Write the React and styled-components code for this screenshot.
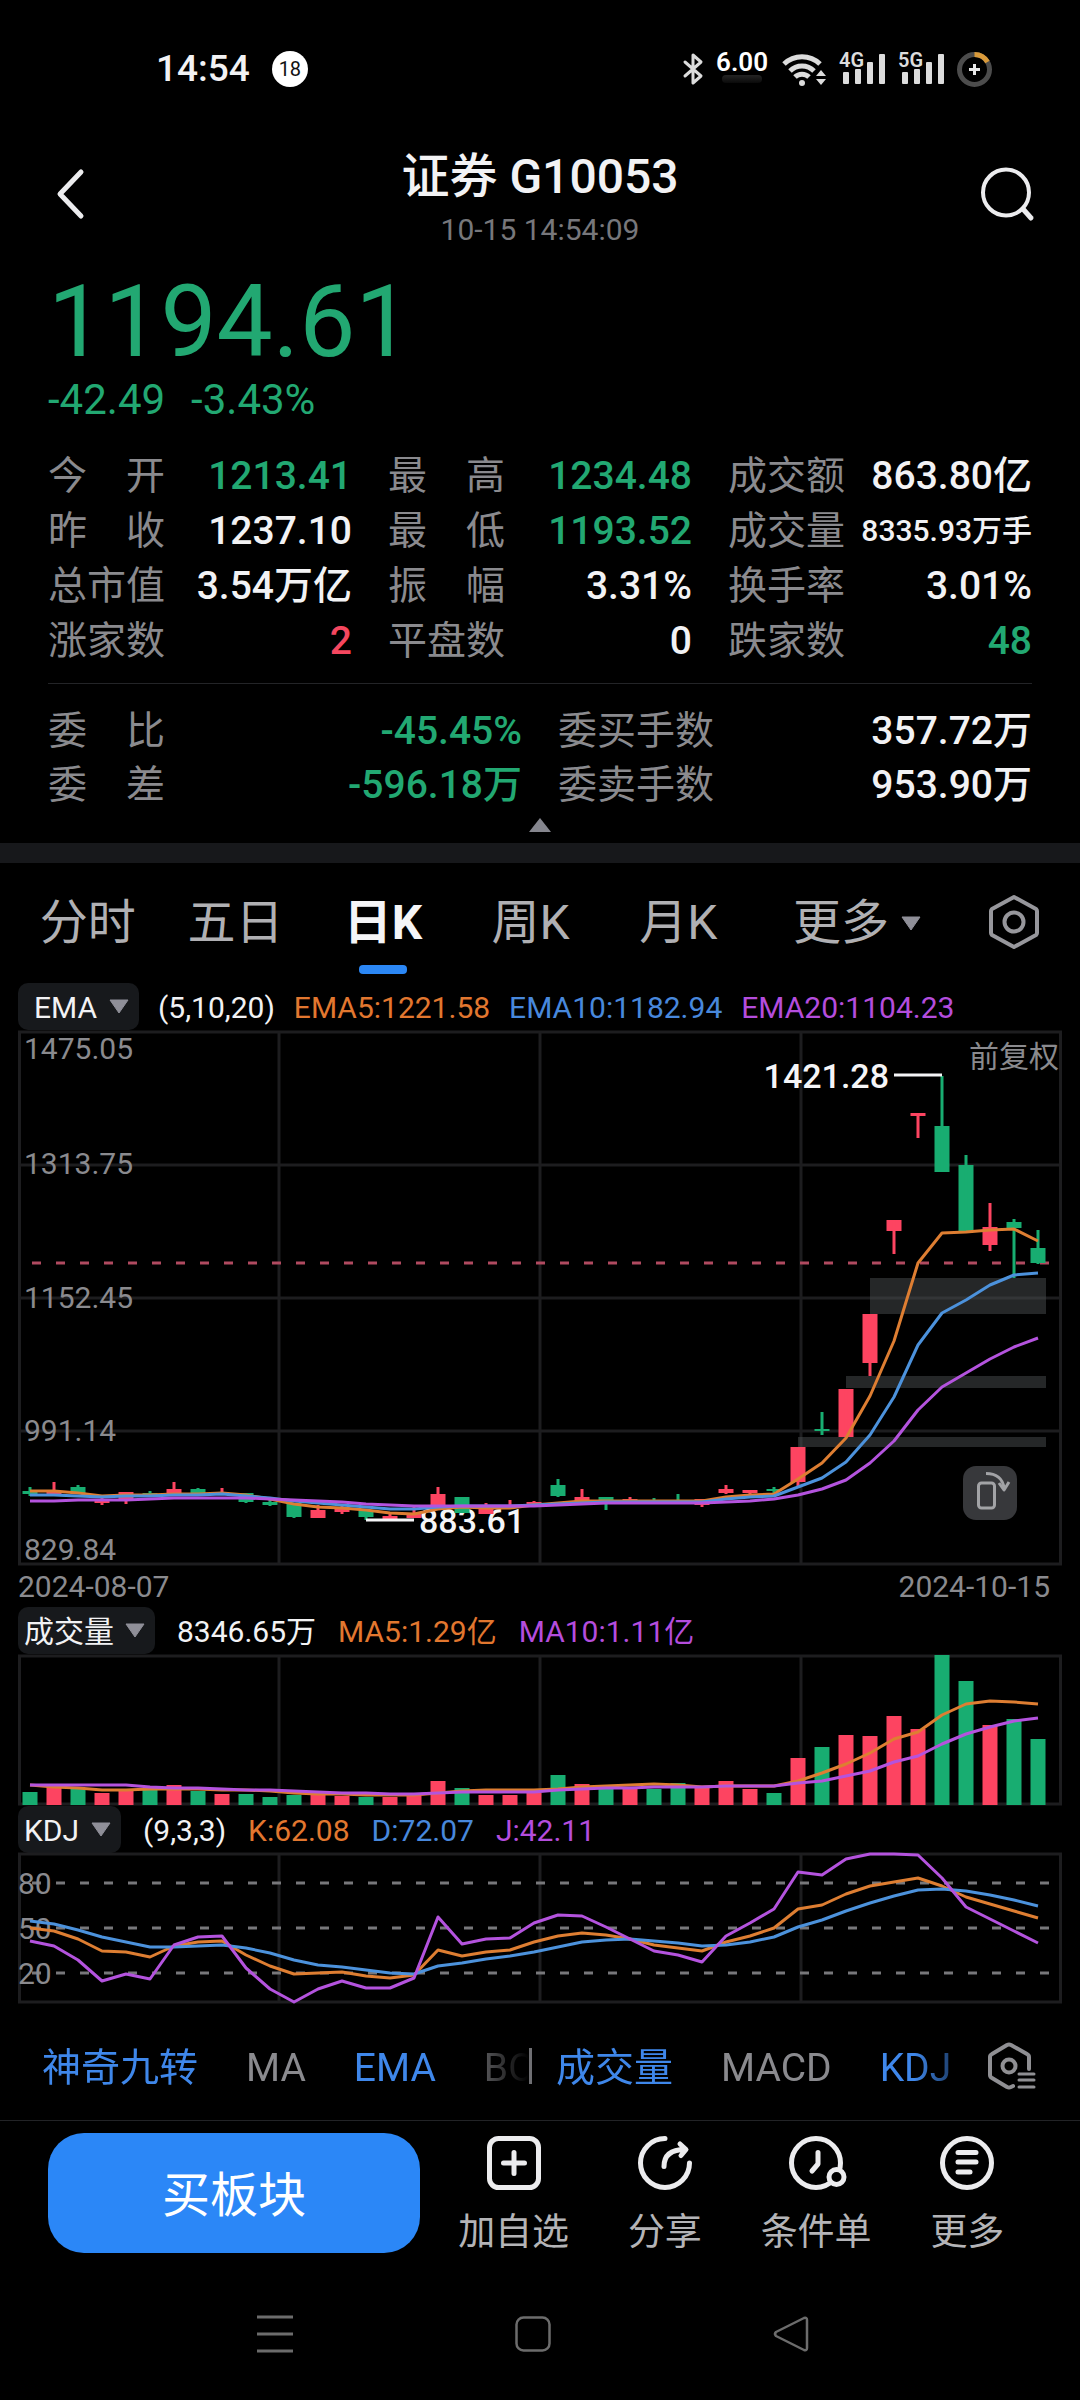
import React, { useState } from 'react';
import styled, { createGlobalStyle, css } from 'styled-components';

const GlobalStyle = createGlobalStyle`
  * {
    box-sizing: border-box;
  }

  body {
    margin: 0;
    background: #000000;
    color: #f2f2f4;
    font-family: Roboto, 'Noto Sans CJK SC', sans-serif;
  }

  button,
  select {
    margin: 0;
    padding: 0;
    border: 0;
    background: none;
    color: inherit;
    font: inherit;
    cursor: pointer;
  }

  svg {
    display: block;
    flex: none;
    overflow: visible;
  }
`;

const tones = {
  up: '#f5475f',
  down: '#22a872',
  plain: '#f2f2f4',
  orange: '#e2772f',
  blue: '#4888dc',
  purple: '#b44ddd',
};

const RED = '#fd4461';
const GREEN = '#18ad71';
const GRID = '#1d1d1f';
const MUTED = '#8a8a8e';

const Page = styled.div`
  display: flex;
  flex-direction: column;
  min-height: 100vh;
  background: #000000;
`;

const StatusBar = styled.div`
  display: flex;
  align-items: center;
  justify-content: space-between;
  height: 138px;
  padding: 0 88px 0 156px;
`;

const StatusGroup = styled.div`
  display: flex;
  align-items: center;
  gap: ${({ $gap }) => $gap}px;
`;

const Clock = styled.span`
  font-size: 37px;
  font-weight: 500;
  line-height: 44px;
`;

const NoticeCount = styled.span`
  display: grid;
  place-items: center;
  width: 36px;
  height: 36px;
  border-radius: 50%;
  background: #ffffff;
  color: #111111;
  font-size: 20px;
`;

const NetSpeed = styled.span`
  display: flex;
  flex-direction: column;
  align-items: center;
  height: 36px;
  color: #ffffff;
  font-size: 26px;
  font-weight: 600;
  line-height: 22px;

  &::after {
    content: '';
    width: 40px;
    height: 8px;
    margin-top: 2px;
    border-radius: 4px;
    background: linear-gradient(#242424, #0a0a0a);
  }
`;

const Header = styled.header`
  display: flex;
  align-items: flex-start;
  justify-content: space-between;
  min-height: 128px;
  padding: 9px 44px 0;
`;

const IconButton = styled.button`
  display: grid;
  place-items: center;
  width: 54px;
  height: 94px;
`;

const TitleBlock = styled.div`
  text-align: center;
`;

const Title = styled.h1`
  margin: 0;
  font-size: 48px;
  font-weight: 500;
  line-height: 60px;
`;

const Timestamp = styled.div`
  color: #77777b;
  font-size: 30px;
  line-height: 46px;
`;

const Quote = styled.section`
  padding: 0 48px 11px;
`;

const Price = styled.div`
  color: ${tones.down};
  font-size: 100px;
  line-height: 112px;
`;

const Change = styled.div`
  display: flex;
  gap: 26px;
  margin-bottom: 26px;
  color: ${tones.down};
  font-size: 42px;
  line-height: 44px;
`;

const Stats = styled.dl`
  display: grid;
  grid-template-columns: repeat(${({ $columns }) => $columns}, 1fr);
  grid-auto-rows: ${({ $row }) => $row}px;
  column-gap: 36px;
  margin: 0;
`;

const Stat = styled.div`
  display: flex;
  align-items: center;
  justify-content: space-between;
  white-space: nowrap;
`;

const StatLabel = styled.dt`
  color: ${MUTED};
  font-size: 39px;
  line-height: 54px;
`;

const StatValue = styled.dd`
  margin: 0;
  color: ${({ $tone }) => tones[$tone]};
  font-size: ${({ $small }) => ($small ? 30 : 39)}px;
  font-weight: 500;
  line-height: 54px;
`;

const Divider = styled.hr`
  margin: 15px 0 20px;
  border: 0;
  border-top: 1px solid #232427;
`;

const Collapse = styled.button`
  display: block;
  margin: 6px auto 0;
`;

const Band = styled.div`
  height: 20px;
  background: #17181b;
`;

const Tabs = styled.nav`
  display: grid;
  grid-template-columns: repeat(5, 1fr) 210px 104px;
  padding: 30px 14px 0;
`;

const Tab = styled.button`
  display: flex;
  flex-direction: column;
  align-items: center;
  gap: 12px;
  color: ${({ $active }) => ($active ? '#f5f5f7' : '#b0b0b3')};
  font-size: 48px;
  font-weight: ${({ $active }) => ($active ? 700 : 400)};
  line-height: 60px;
  white-space: nowrap;

  &::after {
    content: '';
    width: 48px;
    height: 9px;
    border-radius: 4px;
    background: ${({ $active }) => ($active ? '#2b87f5' : 'transparent')};
  }
`;

const MoreTab = styled.button`
  display: flex;
  align-items: center;
  justify-content: center;
  gap: 12px;
  height: 60px;
  color: #b0b0b3;
  font-size: 48px;
  line-height: 60px;
`;

const TabSettings = styled.button`
  display: grid;
  place-items: center;
  height: 58px;
`;

const Charts = styled.section`
  padding-top: 9px;
`;

const Legend = styled.div`
  display: flex;
  align-items: center;
  gap: ${({ $gap }) => $gap}px;
  height: 47px;
  padding-left: 18px;
  font-size: 30px;
  line-height: 44px;
  white-space: nowrap;
`;

const Chip = styled.label`
  display: flex;
  align-items: center;
  height: 47px;
  padding: 0 10px 0 ${({ $inset }) => $inset}px;
  border-radius: 10px;
  background: #17191c;

  svg {
    margin-left: -20px;
    pointer-events: none;
  }
`;

const ChipSelect = styled.select`
  appearance: none;
  padding: 3px 31px 0 0;

  option {
    color: #111111;
  }
`;

const LegendItem = styled.span`
  padding-top: 3px;
  color: ${({ $tone }) => tones[$tone]};
`;

const ChartArea = styled.div`
  position: relative;
`;

const Plot = styled.svg`
  width: 100%;
  height: auto;

  text {
    fill: ${MUTED};
    font-size: 30px;
  }

  text.mark {
    fill: #f5f5f7;
    font-size: 34px;
    font-weight: 500;
  }
`;

const RotateButton = styled.button`
  position: absolute;
  right: 63px;
  bottom: 45px;
  display: grid;
  place-items: center;
  width: 54px;
  height: 54px;
  border-radius: 13px;
  background: #37383b;
`;

const Dates = styled.div`
  display: flex;
  justify-content: space-between;
  padding: 2px 30px 0 18px;
  color: ${MUTED};
  font-size: 30px;
  line-height: 40px;
`;

const Indicators = styled.div`
  display: flex;
  align-items: center;
  height: 117px;
  padding: 8px 44px 0 42px;
  border-bottom: 1px solid #222326;
`;

const fade = css`
  mask-image: linear-gradient(to right, #000 calc(100% - 72px), transparent);
`;

const IndicatorList = styled.div`
  display: flex;
  flex: ${({ $grow }) => $grow} 1 0;
  min-width: 0;
  gap: 48px;
  overflow: hidden;
  ${fade}
`;

const Separator = styled.span`
  width: 3px;
  height: 36px;
  margin-right: 24px;
  background: #6f6f73;
`;

const Indicator = styled.button`
  flex: none;
  padding-top: 4px;
  color: ${({ $on }) => ($on ? '#3f87ea' : MUTED)};
  font-size: 39px;
  line-height: 54px;
`;

const BottomBar = styled.div`
  display: flex;
  align-items: flex-start;
  padding: 12px 37px 12px 48px;
`;

const BuyButton = styled.button`
  flex: 372 1 0;
  height: 120px;
  margin-right: 18px;
  padding-bottom: 4px;
  border-radius: 36px;
  background: #2b87f7;
  color: #ffffff;
  font-size: 48px;
`;

const Actions = styled.div`
  display: grid;
  flex: 605 1 0;
  grid-template-columns: repeat(4, 1fr);
  padding-top: 3px;
`;

const Action = styled.button`
  display: flex;
  flex-direction: column;
  align-items: center;
  gap: 20px;
  color: #b4b4b7;
  font-size: 37px;
  line-height: 46px;
  white-space: nowrap;
`;

const SystemNav = styled.nav`
  display: grid;
  grid-template-columns: repeat(3, 1fr);
  height: 132px;
  padding: 0 160px 0 146px;
`;

const SystemButton = styled.button`
  display: grid;
  place-items: center;
`;

/* ---------- data ---------- */

const stats = [
  { label: '今　开', value: '1213.41', tone: 'down' },
  { label: '最　高', value: '1234.48', tone: 'down' },
  { label: '成交额', value: '863.80亿', tone: 'plain' },
  { label: '昨　收', value: '1237.10', tone: 'plain' },
  { label: '最　低', value: '1193.52', tone: 'down' },
  { label: '成交量', value: '8335.93万手', tone: 'plain', small: true },
  { label: '总市值', value: '3.54万亿', tone: 'plain' },
  { label: '振　幅', value: '3.31%', tone: 'plain' },
  { label: '换手率', value: '3.01%', tone: 'plain' },
  { label: '涨家数', value: '2', tone: 'up' },
  { label: '平盘数', value: '0', tone: 'plain' },
  { label: '跌家数', value: '48', tone: 'down' },
];

const orders = [
  { label: '委　比', value: '-45.45%', tone: 'down' },
  { label: '委买手数', value: '357.72万', tone: 'plain' },
  { label: '委　差', value: '-596.18万', tone: 'down' },
  { label: '委卖手数', value: '953.90万', tone: 'plain' },
];

const periods = ['分时', '五日', '日K', '周K', '月K'];

// direction, body top, body bottom, wick top, wick bottom
const candles = [
  ['g', 1491, 1494, 1487, 1496], ['r', 1491, 1495, 1482, 1495], ['g', 1487, 1494, 1485, 1494],
  ['r', 1500, 1503, 1497, 1505], ['r', 1492, 1499, 1492, 1504], ['g', 1493, 1496, 1491, 1496],
  ['r', 1489, 1495, 1482, 1495], ['g', 1489, 1494, 1488, 1494], ['r', 1493, 1495, 1488, 1495],
  ['g', 1493, 1502, 1493, 1503], ['g', 1502, 1505, 1500, 1506], ['g', 1503, 1517, 1503, 1518],
  ['r', 1510, 1518, 1505, 1518], ['r', 1507, 1512, 1506, 1514], ['g', 1511, 1517, 1511, 1520],
  ['r', 1516, 1519, 1514, 1519], ['r', 1513, 1518, 1505, 1518], ['r', 1494, 1509, 1487, 1509],
  ['g', 1497, 1513, 1497, 1513], ['r', 1509, 1514, 1503, 1514], ['r', 1505, 1507, 1500, 1507],
  ['r', 1502, 1504, 1501, 1504], ['g', 1485, 1496, 1479, 1497], ['r', 1497, 1505, 1489, 1505],
  ['g', 1497, 1504, 1497, 1510], ['r', 1499, 1502, 1497, 1502], ['g', 1500, 1503, 1498, 1503],
  ['g', 1500, 1503, 1494, 1503], ['r', 1499, 1505, 1499, 1507], ['r', 1489, 1493, 1485, 1494],
  ['r', 1490, 1493, 1490, 1495], ['g', 1489, 1491, 1487, 1494], ['r', 1447, 1482, 1447, 1487],
  ['g', 1429, 1431, 1412, 1435], ['r', 1389, 1437, 1389, 1437], ['r', 1314, 1363, 1314, 1376],
  ['r', 1220, 1231, 1220, 1254], ['r', 1113, 1116, 1113, 1138], ['g', 1126, 1172, 1076, 1172],
  ['g', 1165, 1231, 1155, 1231], ['r', 1227, 1245, 1203, 1251], ['g', 1222, 1228, 1219, 1278],
  ['g', 1248, 1263, 1230, 1264],
];

const ema5 = [
  1491, 1491, 1493, 1496, 1495, 1495, 1494, 1494, 1493, 1495, 1499, 1504, 1507, 1508, 1510,
  1513, 1514, 1509, 1507, 1508, 1508, 1505, 1503, 1501, 1501, 1501, 1501, 1501, 1501, 1497,
  1495, 1494, 1479, 1463, 1438, 1396, 1341, 1263, 1233, 1232, 1230, 1229, 1241,
];
const ema10 = [
  1495, 1495, 1496, 1497, 1496, 1496, 1495, 1495, 1494, 1496, 1498, 1501, 1503, 1505, 1507,
  1509, 1509, 1507, 1506, 1506, 1506, 1505, 1504, 1503, 1502, 1502, 1502, 1502, 1502, 1499,
  1497, 1496, 1487, 1478, 1462, 1435, 1397, 1345, 1313, 1300, 1285, 1275, 1273,
];
const ema20 = [
  1501, 1501, 1500, 1500, 1500, 1499, 1498, 1498, 1498, 1498, 1499, 1500, 1501, 1502, 1504,
  1505, 1506, 1506, 1506, 1506, 1506, 1506, 1505, 1504, 1503, 1503, 1503, 1503, 1503, 1502,
  1501, 1499, 1495, 1489, 1480, 1463, 1441, 1410, 1387, 1373, 1359, 1347, 1338,
];

const volumes = [
  1792, 1786, 1789, 1793, 1790, 1790, 1785, 1791, 1794, 1794, 1797, 1795, 1795, 1796, 1797,
  1797, 1796, 1781, 1788, 1795, 1795, 1793, 1775, 1784, 1789, 1788, 1789, 1783, 1788, 1781,
  1789, 1793, 1758, 1747, 1735, 1736, 1716, 1729, 1655, 1681, 1725, 1719, 1739,
];
const volMa5 = [
  1785, 1787, 1788, 1790, 1790, 1789, 1789, 1789, 1790, 1790, 1791, 1793, 1794, 1794, 1795,
  1795, 1795, 1793, 1791, 1790, 1790, 1790, 1789, 1787, 1786, 1785, 1784, 1785, 1787, 1786,
  1786, 1786, 1781, 1773, 1764, 1753, 1739, 1732, 1715, 1704, 1701, 1702, 1704,
];
const volMa10 = [
  1785, 1785, 1785, 1785, 1785, 1787, 1788, 1788, 1789, 1790, 1790, 1791, 1792, 1793, 1793,
  1794, 1794, 1793, 1792, 1792, 1792, 1792, 1790, 1789, 1788, 1788, 1787, 1787, 1787, 1786,
  1786, 1786, 1783, 1781, 1776, 1771, 1762, 1756, 1744, 1734, 1727, 1721, 1718,
];

const kLine = [
  1928, 1931, 1939, 1951, 1952, 1957, 1946, 1942, 1941, 1955, 1966, 1974, 1973, 1972, 1976,
  1978, 1975, 1950, 1956, 1952, 1950, 1942, 1936, 1933, 1935, 1939, 1945, 1948, 1951, 1942,
  1936, 1928, 1909, 1905, 1894, 1886, 1882, 1878, 1886, 1897, 1904, 1911, 1918,
];
const dLine = [
  1921, 1924, 1930, 1937, 1942, 1947, 1947, 1946, 1945, 1948, 1953, 1960, 1965, 1967, 1970,
  1973, 1974, 1966, 1963, 1959, 1956, 1952, 1947, 1942, 1940, 1939, 1941, 1943, 1946, 1945,
  1942, 1937, 1927, 1920, 1911, 1903, 1896, 1890, 1889, 1891, 1895, 1900, 1906,
];
const jLine = [
  1941, 1946, 1960, 1981, 1974, 1979, 1945, 1937, 1936, 1968, 1989, 2002, 1989, 1981, 1988,
  1988, 1978, 1917, 1944, 1939, 1938, 1923, 1915, 1916, 1927, 1939, 1951, 1955, 1962, 1936,
  1923, 1909, 1872, 1875, 1859, 1854, 1854, 1855, 1878, 1907, 1919, 1931, 1943,
];

const GAP_ZONES = [
  [870, 1278, 36],
  [846, 1376, 12],
  [798, 1437, 10],
];

const slotX = (i) => 30 + i * 24;
const toPoints = (values) => values.map((y, i) => `${slotX(i)},${y}`).join(' ');

/* ---------- small drawings ---------- */

const DownTriangle = () => (
  <svg width="20" height="15" viewBox="0 0 20 15">
    <path d="M1 1h18L10 14z" fill="#8f8f98" stroke="#8f8f98" strokeLinejoin="round" />
  </svg>
);

const SignalIcon = ({ label }) => (
  <svg width="46" height="36" viewBox="0 0 46 36">
    <g fill="#dcdcdc">
      <rect x="4" y="21" width="6" height="12" rx="1" />
      <rect x="16" y="18" width="6" height="15" rx="1" />
      <rect x="28" y="11" width="6" height="22" rx="1" />
      <rect x="40" y="3" width="6" height="30" rx="1" />
    </g>
    <text x="0" y="16" fill="#dcdcdc" fontSize="20" fontWeight="600">{label}</text>
  </svg>
);

const StatusIcons = () => (
  <StatusGroup $gap={13}>
    <svg width="20" height="34" viewBox="0 0 20 34" fill="none" stroke="#dcdcdc" strokeWidth="3" strokeLinejoin="round" strokeLinecap="round">
      <path d="M2 10l16 14-8 7V3l8 7L2 24" />
    </svg>
    <NetSpeed>6.00</NetSpeed>
    <svg width="45" height="36" viewBox="0 0 45 36" fill="none" stroke="#dcdcdc" strokeWidth="5">
      <path d="M3 13a26 26 0 0 1 36 0" />
      <path d="M9 20a17 17 0 0 1 24 0" />
      <path d="M14 26a10 10 0 0 1 14 0" />
      <g fill="#dcdcdc" stroke="none">
        <circle cx="21" cy="32" r="3" />
        <path d="M35 25l5-6 5 6zM35 28h10l-5 6z" />
      </g>
    </svg>
    <SignalIcon label="4G" />
    <SignalIcon label="5G" />
    <svg width="35" height="35" viewBox="0 0 35 35" fill="none">
      <circle cx="17.5" cy="17.5" r="15" stroke="#4c4c4c" strokeWidth="5" />
      <path d="M17.5 2.5A15 15 0 0 1 30.5 10" stroke="#d99a3a" strokeWidth="5" />
      <path d="M17.5 12v11M12 17.5h11" stroke="#e8e8e8" strokeWidth="3" />
    </svg>
  </StatusGroup>
);

const actions = [
  {
    label: '加自选',
    icon: (
      <>
        <rect x="2.5" y="2.5" width="49" height="49" rx="9" />
        <path d="M27 16.5v21M16.5 27h21" />
      </>
    ),
  },
  {
    label: '分享',
    icon: (
      <>
        <path d="M27 2.5A24.5 24.5 0 1 0 51.5 27" />
        <path d="M26 30.5C26 20 32 13.5 47 13.5M42 8l6 5.5-5 6" />
      </>
    ),
  },
  {
    label: '条件单',
    icon: (
      <>
        <circle cx="27" cy="27" r="24.5" />
        <path d="M29 16.5V28l-6 7" />
        <circle cx="47.5" cy="41" r="7.5" fill="#000" />
      </>
    ),
  },
  {
    label: '更多',
    icon: (
      <>
        <circle cx="27" cy="27" r="24.5" />
        <path d="M18 16.5h18M18 26h18M18 36h12" />
      </>
    ),
  },
];

/* ---------- charts ---------- */

const Frame = ({ top, bottom }) => (
  <g stroke={GRID} strokeWidth="3" fill="none">
    <rect x="19.5" y={top} width="1041" height={bottom - top} />
    <path d={[279, 540, 801].map((x) => `M${x} ${top}V${bottom}`).join('')} />
  </g>
);

const Lines = ({ orange, blue, purple }) => (
  <g fill="none" strokeWidth="3" strokeLinejoin="round">
    {orange && <polyline points={toPoints(orange)} stroke="#de7e32" />}
    {blue && <polyline points={toPoints(blue)} stroke="#4c92dc" />}
    {purple && <polyline points={toPoints(purple)} stroke="#b453de" />}
  </g>
);

const PriceChart = () => (
  <Plot viewBox="0 1030 1080 535" role="img" aria-label="日K线图">
    <Frame top={1032} bottom={1564} />
    <path d="M19 1165H1061M19 1298H1061M19 1431H1061" stroke={GRID} strokeWidth="3" />
    {GAP_ZONES.map(([x, y, h]) => (
      <rect key={y} x={x} y={y} width={1046 - x} height={h} fill="#4a4d50" fillOpacity="0.5" />
    ))}
    <path d="M32 1263H1050" stroke="#b04a60" strokeWidth="3" strokeDasharray="9 15" />
    <text x="24" y="1059">1475.05</text>
    <text x="24" y="1174">1313.75</text>
    <text x="24" y="1308">1152.45</text>
    <text x="24" y="1441">991.14</text>
    <text x="24" y="1560">829.84</text>
    <text x="1059" y="1067" textAnchor="end">前复权</text>
    <text className="mark" x="889" y="1088" textAnchor="end">1421.28</text>
    <text className="mark" x="419" y="1533">883.61</text>
    {candles.map(([dir, top, bottom, high, low], i) => (
      <g key={i} fill={dir === 'r' ? RED : GREEN}>
        <rect x={slotX(i) - 7.5} y={top} width="15" height={bottom - top} />
        <rect x={slotX(i) - 1.5} y={high} width="3" height={low - high} />
      </g>
    ))}
    <path d="M894 1075H942M366 1520H414" stroke="#f5f5f7" strokeWidth="3" />
    <Lines orange={ema5} blue={ema10} purple={ema20} />
  </Plot>
);

const VolumeChart = () => (
  <Plot viewBox="0 1654 1080 152" role="img" aria-label="成交量">
    <Frame top={1656} bottom={1804} />
    {volumes.map((y, i) => (
      <rect
        key={i}
        x={slotX(i) - 7.5}
        y={y}
        width="15"
        height={1805 - y}
        fill={candles[i][0] === 'r' ? RED : GREEN}
      />
    ))}
    <Lines orange={volMa5} purple={volMa10} />
  </Plot>
);

const KdjChart = () => (
  <Plot viewBox="0 1853 1080 151" role="img" aria-label="KDJ">
    <Frame top={1854} bottom={2002} />
    <path
      d="M32 1883H1050M32 1928H1050M32 1973H1050"
      stroke="#77777a"
      strokeWidth="3"
      strokeDasharray="9 15"
    />
    <text x="18" y="1894">80</text>
    <text x="18" y="1939">50</text>
    <text x="18" y="1984">20</text>
    <Lines orange={kLine} blue={dLine} purple={jLine} />
  </Plot>
);

const LegendChip = ({ options, inset, title }) => (
  <Chip $inset={inset}>
    <ChipSelect aria-label={title}>
      {options.map((name) => (
        <option key={name}>{name}</option>
      ))}
    </ChipSelect>
    <DownTriangle />
  </Chip>
);

const StatList = ({ items, columns, row }) => (
  <Stats $columns={columns} $row={row}>
    {items.map(({ label, value, tone, small }) => (
      <Stat key={label}>
        <StatLabel>{label}</StatLabel>
        <StatValue $tone={tone} $small={small}>{value}</StatValue>
      </Stat>
    ))}
  </Stats>
);

const App = () => {
  const [period, setPeriod] = useState('日K');

  return (
    <Page>
      <GlobalStyle />

      <StatusBar>
        <StatusGroup $gap={22}>
          <Clock>14:54</Clock>
          <NoticeCount>18</NoticeCount>
        </StatusGroup>
        <StatusIcons />
      </StatusBar>

      <Header>
        <IconButton aria-label="返回">
          <svg width="54" height="54" viewBox="0 0 54 54" fill="none" stroke="#ececee" strokeWidth="5" strokeLinecap="round" strokeLinejoin="round">
            <path d="M37 5L16 27l21 22" />
          </svg>
        </IconButton>
        <TitleBlock>
          <Title>证券 G10053</Title>
          <Timestamp>10-15 14:54:09</Timestamp>
        </TitleBlock>
        <IconButton aria-label="搜索">
          <svg width="54" height="54" viewBox="0 0 54 54" fill="none" stroke="#ececee" strokeWidth="4" strokeLinecap="round">
            <circle cx="24" cy="25.5" r="23" />
            <path d="M41 42l8 9" strokeWidth="5" />
          </svg>
        </IconButton>
      </Header>

      <Quote>
        <Price>1194.61</Price>
        <Change>
          <span>-42.49</span>
          <span>-3.43%</span>
        </Change>
        <StatList items={stats} columns={3} row={55} />
        <Divider />
        <StatList items={orders} columns={2} row={54} />
        <Collapse aria-label="收起">
          <svg width="22" height="14" viewBox="0 0 22 14">
            <path d="M0 14L11 0l11 14z" fill="#85868e" />
          </svg>
        </Collapse>
      </Quote>

      <Band />

      <Tabs>
        {periods.map((name) => (
          <Tab key={name} $active={name === period} onClick={() => setPeriod(name)}>
            {name}
          </Tab>
        ))}
        <MoreTab aria-haspopup="menu">
          更多
          <DownTriangle />
        </MoreTab>
        <TabSettings aria-label="图表设置">
          <svg width="54" height="56" viewBox="0 0 54 56" fill="none" stroke="#97979c" strokeWidth="4" strokeLinejoin="round">
            <path d="M27 3l22 12q1 1 1 2v22q0 1-1 2L27 53 5 41q-1-1-1-2V17q0-1 1-2z" />
            <circle cx="27" cy="28" r="9.5" />
          </svg>
        </TabSettings>
      </Tabs>

      <Charts>
        <Legend $gap={19}>
          <LegendChip options={['EMA', 'MA']} inset={16} title="主图指标" />
          <LegendItem $tone="plain">(5,10,20)</LegendItem>
          <LegendItem $tone="orange">EMA5:1221.58</LegendItem>
          <LegendItem $tone="blue">EMA10:1182.94</LegendItem>
          <LegendItem $tone="purple">EMA20:1104.23</LegendItem>
        </Legend>
        <ChartArea>
          <PriceChart />
          <RotateButton aria-label="横屏">
            <svg width="54" height="54" viewBox="0 0 54 54" fill="none" stroke="#a2a3a6" strokeWidth="3" strokeLinejoin="round">
              <rect x="15.5" y="17" width="16" height="25" rx="3" />
              <path d="M23 7.5c10 0 17 5 18 15" />
              <path d="M36 17l5 7 5-8" />
            </svg>
          </RotateButton>
        </ChartArea>
        <Dates>
          <span>2024-08-07</span>
          <span>2024-10-15</span>
        </Dates>

        <Legend $gap={22}>
          <LegendChip options={['成交量']} inset={6} title="副图一指标" />
          <LegendItem $tone="plain">8346.65万</LegendItem>
          <LegendItem $tone="orange">MA5:1.29亿</LegendItem>
          <LegendItem $tone="purple">MA10:1.11亿</LegendItem>
        </Legend>
        <VolumeChart />

        <Legend $gap={22}>
          <LegendChip options={['KDJ']} inset={6} title="副图二指标" />
          <LegendItem $tone="plain">(9,3,3)</LegendItem>
          <LegendItem $tone="orange">K:62.08</LegendItem>
          <LegendItem $tone="blue">D:72.07</LegendItem>
          <LegendItem $tone="purple">J:42.11</LegendItem>
        </Legend>
        <KdjChart />
      </Charts>

      <Indicators>
        <IndicatorList $grow={487}>
          <Indicator $on>神奇九转</Indicator>
          <Indicator>MA</Indicator>
          <Indicator $on>EMA</Indicator>
          <Indicator>BO</Indicator>
        </IndicatorList>
        <Separator />
        <IndicatorList $grow={430}>
          <Indicator $on>成交量</Indicator>
          <Indicator>MACD</Indicator>
          <Indicator $on>KDJ</Indicator>
        </IndicatorList>
        <button aria-label="指标设置">
          <svg width="50" height="50" viewBox="0 0 50 50" fill="none" stroke="#8f8f93" strokeWidth="4" strokeLinejoin="round" strokeLinecap="round">
            <path d="M43 28V16q0-2-2-3L25 4q-2-1-4 0L6 13q-2 1-2 3v18q0 2 2 3l15 9q2 1 4 0l2-1" />
            <circle cx="23" cy="25" r="6.5" />
            <path d="M33 33h15M33 39h15M33 46h15" strokeWidth="3" />
          </svg>
        </button>
      </Indicators>

      <BottomBar>
        <BuyButton>买板块</BuyButton>
        <Actions>
          {actions.map(({ label, icon }) => (
            <Action key={label}>
              <svg width="54" height="54" viewBox="0 0 54 54" fill="none" stroke="#ececee" strokeWidth="5" strokeLinecap="round" strokeLinejoin="round">
                {icon}
              </svg>
              {label}
            </Action>
          ))}
        </Actions>
      </BottomBar>

      <SystemNav>
        <SystemButton aria-label="最近任务">
          <svg width="36" height="38" viewBox="0 0 36 38" stroke="#6c6c6c" strokeWidth="3">
            <path d="M0 2h36M0 19h36M0 36h36" />
          </svg>
        </SystemButton>
        <SystemButton aria-label="主屏幕">
          <svg width="36" height="36" viewBox="0 0 36 36" fill="none" stroke="#6c6c6c" strokeWidth="2.5">
            <rect x="1.5" y="1.5" width="33" height="33" rx="7" />
          </svg>
        </SystemButton>
        <SystemButton aria-label="后退">
          <svg width="36" height="36" viewBox="0 0 36 36" fill="none" stroke="#6c6c6c" strokeWidth="2.5" strokeLinejoin="round">
            <path d="M3 16Q1 18 3 20L31 34q3 1 3-2V4q0-3-3-2z" />
          </svg>
        </SystemButton>
      </SystemNav>
    </Page>
  );
};

export default App;
